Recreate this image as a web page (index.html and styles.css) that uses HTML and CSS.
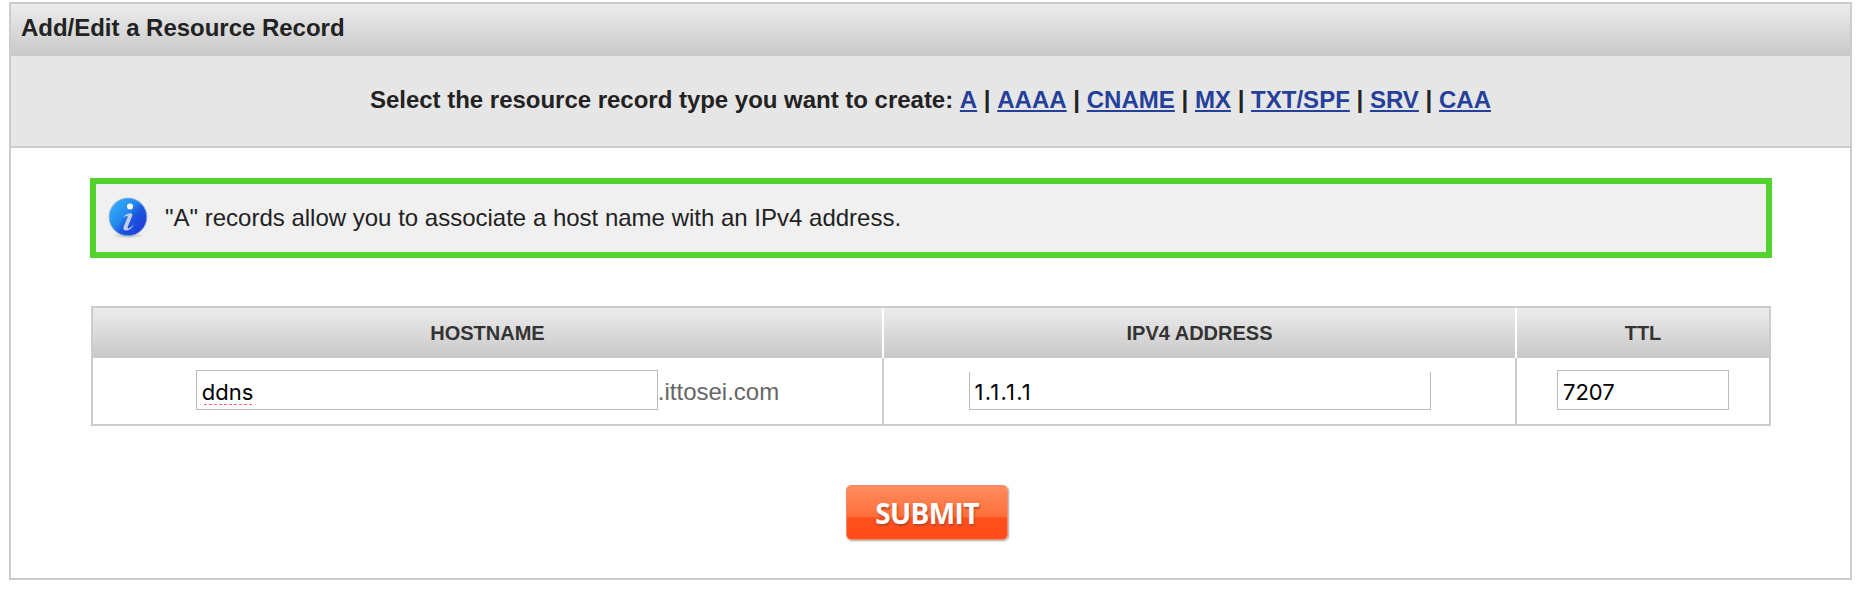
FILE: index.html
```html
<!DOCTYPE html>
<html lang="en">
<head>
<meta charset="utf-8">
<title>Add/Edit a Resource Record</title>
<link rel="stylesheet" href="styles.css">
</head>
<body>
<main class="panel">
  <h1 class="panel-title">Add/Edit a Resource Record</h1>
  <nav class="types"><span class="prompt">Select the resource record type you want to create:</span> <a href="#">A</a> | <a href="#">AAAA</a> | <a href="#">CNAME</a> | <a href="#">MX</a> | <a href="#">TXT/SPF</a> | <a href="#">SRV</a> | <a href="#">CAA</a></nav>
  <form class="content">
    <div class="notice">
      <svg class="info" viewBox="0 0 40 42" aria-hidden="true">
        <defs>
          <linearGradient id="ball" x1="0" y1="0.1" x2="0.9" y2="0.9">
            <stop offset="0" stop-color="#35b5fb"/>
            <stop offset="0.45" stop-color="#2388ee"/>
            <stop offset="0.62" stop-color="#1c58dc"/>
            <stop offset="1" stop-color="#1f38da"/>
          </linearGradient>
          <radialGradient id="shade"><stop offset="0" stop-color="#999" stop-opacity=".7"/><stop offset="1" stop-color="#999" stop-opacity="0"/></radialGradient>
        </defs>
        <ellipse cx="20" cy="38.5" rx="16" ry="3" fill="url(#shade)"/>
        <circle cx="20" cy="20" r="18.9" fill="url(#ball)" stroke="#8eb0dc" stroke-width="1"/>
        <circle cx="22" cy="9.6" r="3" fill="#fff"/>
        <path d="M14.500 20.500 Q19 16 23 16.200 Q25 16.800 24 19.500 L19.800 29.500 Q19 32.200 21 31.300 Q23.500 30 26 27.200 Q23 33 18.500 33.600 Q14.500 33.800 15.700 29.500 L19.500 20.500 Q20.200 18.300 18.300 18.900 Z" fill="#c5cfed"/>
      </svg>
      <span class="notice-text">"A" records allow you to associate a host name with an IPv4 address.</span>
    </div>
    <div class="records">
      <div class="th">HOSTNAME</div><div class="th">IPV4 ADDRESS</div><div class="th">TTL</div>
      <div class="td"><div class="field"><span class="misspelt">ddns</span></div><span class="domain">.ittosei.com</span></div>
      <div class="td"><div class="field field-open">1.1.1.1</div></div>
      <div class="td"><div class="field field-short">7207</div></div>
    </div>
    <button class="submit" type="button">SUBMIT</button>
  </form>
</main>
</body>
</html>
```
FILE: styles.css
```css
* { box-sizing: border-box; }
body { margin: 0; background: #fff; color: #222; font-family: "Liberation Sans", Arial, sans-serif; font-size: 24px; }
.panel { width: 1843px; height: 578px; margin: 2px 0 0 9px; border: 2px solid #ccc; }
.panel-title { margin: 0; height: 52px; padding-left: 10px; font-size: 24px; line-height: 48px; letter-spacing: -0.02px; background: linear-gradient(#ececec, #c8c8c8); }
.types { height: 92px; border-bottom: 2px solid #ccc; background: #e6e6e6; text-align: center; font-weight: bold; line-height: 88px; white-space: nowrap; }
.prompt { letter-spacing: -0.02px; }
.types a { color: #24409a; letter-spacing: 0.02px; text-decoration: underline; text-decoration-thickness: 1.5px; text-underline-offset: 2px; text-decoration-skip-ink: none; }
.content { margin: 0; padding: 30px 78px 0 79px; display: flex; flex-direction: column; }
.notice { height: 80px; border: 6px solid #52d330; background: #f0f0f0; display: flex; align-items: center; padding-left: 12px; }
.info { width: 40px; height: 42px; margin-right: 17px; }
.notice-text { line-height: 28px; }
.records { height: 120px; margin: 48px 1px 0; border: 2px solid #ccc; display: grid; grid-template-columns: 789px 633px 1fr; grid-template-rows: 50px 66px; }
.th { background: linear-gradient(#ececec, #c8c8c8); color: #333; font-size: 20px; font-weight: bold; line-height: 50px; text-align: center; }
.th + .th { border-left: 2px solid #fff; }
.td { display: flex; align-items: flex-start; justify-content: center; padding-top: 12px; border-left: 2px solid #ccc; }
.th + .td { border-left: 0; }
.field { width: 462px; height: 40px; border: 1px solid #bbb; padding-left: 5px; color: #000; font: 22px/43px Inter, sans-serif; }
.field-open { height: 38px; margin-top: 2px; border-top: 0; line-height: 40px; letter-spacing: 1.2px; }
.field-short { width: 172px; }
.misspelt { background: repeating-linear-gradient(90deg, #ff6b6b 0 3px, transparent 3px 5px) 2px 100% / 48px 1px no-repeat; }
.domain { color: #666; line-height: 44px; }
.submit { align-self: center; width: 162px; height: 55px; margin: 59px 9px 0 0; padding: 0 0 0 1px; border: 1px solid #f88b67; border-radius: 5px; background: linear-gradient(#ff8c60, #ff6f3a 58%, #ff4f1c 60%, #ff4d1b); box-shadow: 1px 1px 2px #aaa; color: #fff; font: bold 28px/50px "Open Sans", sans-serif; letter-spacing: -0.6px; text-shadow: 1px 2px 2px #b8482a; }
```
